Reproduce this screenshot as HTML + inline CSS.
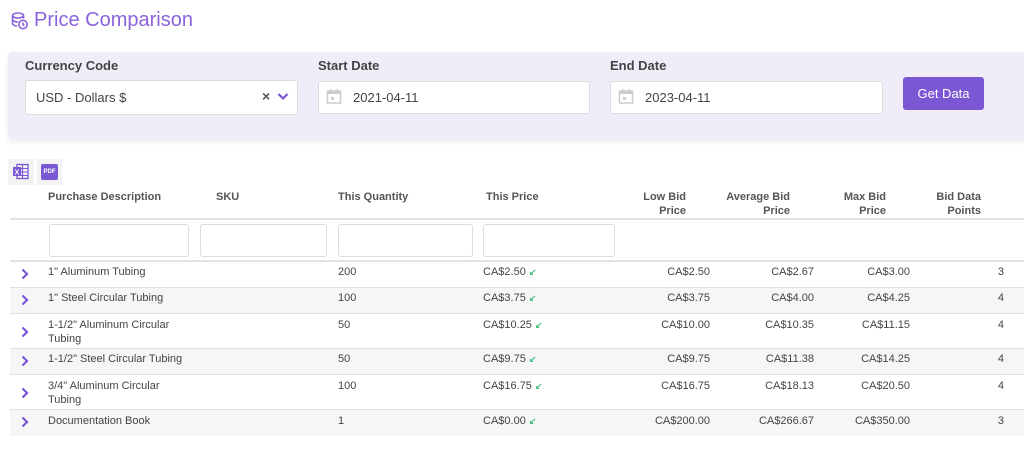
<!DOCTYPE html>
<html><head><meta charset="utf-8"><style>
*{box-sizing:border-box;margin:0;padding:0}
body{width:1024px;height:451px;background:#fff;font-family:"Liberation Sans",sans-serif;color:#444;position:relative;overflow:hidden}
.a{position:absolute;white-space:nowrap}
.title{left:34px;top:9px;font-size:20px;color:#8a63dc}
.panel{left:8px;top:52px;width:1030px;height:87px;background:#f0edf9;border-radius:4px;box-shadow:0 3px 6px rgba(0,0,0,.08)}
.lbl{font-size:13px;font-weight:bold;color:#444;top:58px}
.inp{background:#fff;border:1px solid #ddd;border-radius:3px;height:33px;top:81px;font-size:13px;color:#444;padding:8px 0 0 10px}
.btn{left:903px;top:77px;width:81px;height:33px;background:#7b57d4;border-radius:3px;color:#fff;font-size:13px;text-align:center;line-height:33px}
.th{font-size:11px;font-weight:bold;color:#555;line-height:14px}
.r{text-align:right}
.td{font-size:11px;color:#444;line-height:14px}
.line{left:10px;width:1014px;height:2px;background:#e3e3e3}
.fi{top:224px;height:33px;border:1px solid #ddd;border-radius:3px;background:#fff}
.grey{left:10px;width:1014px;background:#f6f6f6}
.sep{left:10px;width:1014px;height:1px;background:#e0e0e0}
.chev{left:19px;width:11px;height:12px}
.arr{color:#3fbf7f;font-size:9px;font-weight:bold}
</style></head><body>
<svg class="a" style="left:10px;top:11px" width="20" height="20" viewBox="0 0 20 20" fill="none" stroke="#8a63dc" stroke-width="1.6"><ellipse cx="8" cy="4.5" rx="5.5" ry="2.5"/><path d="M2.5 4.5v8c0 1.3 2 2.3 4.5 2.5M13.5 4.5v3M2.5 8.5c0 1.3 2.5 2.5 5.5 2.5"/><circle cx="13" cy="13.5" r="4.2"/><path d="M13 11.5v2.2l1.4 1"/></svg>
<div class="a title">Price Comparison</div>
<div class="a panel"></div>
<div class="a lbl" style="left:25px">Currency Code</div>
<div class="a lbl" style="left:318px">Start Date</div>
<div class="a lbl" style="left:610px">End Date</div>
<div class="a inp" style="left:25px;width:273px;height:35px;top:80px;padding-top:9px">USD - Dollars $</div>
<div class="a" style="left:262px;top:88px;font-size:14px;color:#555;font-weight:bold">×</div>
<svg class="a" style="left:277px;top:92px" width="12" height="9" viewBox="0 0 12 9"><path d="M1.5 2l4.5 4.5L10.5 2" stroke="#7b57d4" stroke-width="2.2" fill="none"/></svg>
<div class="a inp" style="left:318px;width:272px;padding-left:34px">2021-04-11</div>
<div class="a inp" style="left:610px;width:273px;padding-left:34px">2023-04-11</div>
<svg class="a" style="left:326px;top:88px" width="16" height="17" viewBox="0 0 16 17"><rect x="1.5" y="3" width="13" height="12" fill="none" stroke="#ccc" stroke-width="1.5"/><rect x="1.5" y="3" width="13" height="3" fill="#ccc"/><rect x="4" y="1" width="1.5" height="3" fill="#ccc"/><rect x="10.5" y="1" width="1.5" height="3" fill="#ccc"/><rect x="5" y="9" width="3" height="3" fill="#ccc"/></svg>
<svg class="a" style="left:618px;top:88px" width="16" height="17" viewBox="0 0 16 17"><rect x="1.5" y="3" width="13" height="12" fill="none" stroke="#ccc" stroke-width="1.5"/><rect x="1.5" y="3" width="13" height="3" fill="#ccc"/><rect x="4" y="1" width="1.5" height="3" fill="#ccc"/><rect x="10.5" y="1" width="1.5" height="3" fill="#ccc"/><rect x="5" y="9" width="3" height="3" fill="#ccc"/></svg>
<div class="a btn">Get Data</div>
<div class="a" style="left:8px;top:159px;width:26px;height:26px;background:#f3f3f3"></div>
<svg class="a" style="left:12px;top:163px" width="18" height="18" viewBox="0 0 18 18"><rect x="5" y="1.5" width="11" height="14" fill="none" stroke="#7b57d4" stroke-width="1.3"/><path d="M5 5.5h11M5 9h11M5 12.5h11M10.5 1.5v14" stroke="#7b57d4" stroke-width="1.1"/><rect x="1" y="4" width="8" height="9" fill="#7b57d4"/><text x="5" y="11.5" font-size="7" fill="#fff" text-anchor="middle" font-family="Liberation Sans" font-weight="bold">X</text></svg>
<div class="a" style="left:37px;top:159px;width:25px;height:26px;background:#f3f3f3"></div>
<div class="a" style="left:41px;top:164px;width:17px;height:16px;background:#7b57d4;border-radius:2px;color:#fff;font-size:6px;font-weight:bold;text-align:center;line-height:16px">PDF</div>
<div class="a th" style="left:48px;top:190px">Purchase Description</div>
<div class="a th" style="left:216px;top:190px">SKU</div>
<div class="a th" style="left:338px;top:190px">This Quantity</div>
<div class="a th" style="left:486px;top:190px">This Price</div>
<div class="a th r" style="right:338px;top:190px">Low Bid<br>Price</div>
<div class="a th r" style="right:234px;top:190px">Average Bid<br>Price</div>
<div class="a th r" style="right:138px;top:190px">Max Bid<br>Price</div>
<div class="a th r" style="right:43px;top:190px">Bid Data<br>Points</div>
<div class="a line" style="top:218px"></div>
<div class="a fi" style="left:49px;width:140px"></div>
<div class="a fi" style="left:200px;width:127px"></div>
<div class="a fi" style="left:338px;width:135px"></div>
<div class="a fi" style="left:483px;width:132px"></div>
<div class="a line" style="top:260px"></div>
<div class="a grey" style="top:288px;height:26px"></div>
<div class="a grey" style="top:349px;height:26px"></div>
<div class="a grey" style="top:410px;height:26px"></div>
<div class="a sep" style="top:287px"></div>
<div class="a sep" style="top:313px"></div>
<div class="a sep" style="top:348px"></div>
<div class="a sep" style="top:374px"></div>
<div class="a sep" style="top:409px"></div>
<!-- rows -->
<svg class="a chev" style="top:268px" viewBox="0 0 11 12"><path d="M3.5 1.5l4.5 4.5-4.5 4.5" stroke="#7b57d4" stroke-width="2.2" fill="none"/></svg>
<svg class="a chev" style="top:294px" viewBox="0 0 11 12"><path d="M3.5 1.5l4.5 4.5-4.5 4.5" stroke="#7b57d4" stroke-width="2.2" fill="none"/></svg>
<svg class="a chev" style="top:326px" viewBox="0 0 11 12"><path d="M3.5 1.5l4.5 4.5-4.5 4.5" stroke="#7b57d4" stroke-width="2.2" fill="none"/></svg>
<svg class="a chev" style="top:355px" viewBox="0 0 11 12"><path d="M3.5 1.5l4.5 4.5-4.5 4.5" stroke="#7b57d4" stroke-width="2.2" fill="none"/></svg>
<svg class="a chev" style="top:387px" viewBox="0 0 11 12"><path d="M3.5 1.5l4.5 4.5-4.5 4.5" stroke="#7b57d4" stroke-width="2.2" fill="none"/></svg>
<svg class="a chev" style="top:416px" viewBox="0 0 11 12"><path d="M3.5 1.5l4.5 4.5-4.5 4.5" stroke="#7b57d4" stroke-width="2.2" fill="none"/></svg>

<div class="a td" style="left:48px;top:265px">1" Aluminum Tubing</div>
<div class="a td" style="left:338px;top:265px">200</div>
<div class="a td" style="left:483px;top:265px">CA$2.50 <span class="arr">↙</span></div>
<div class="a td r" style="right:314px;top:265px">CA$2.50</div>
<div class="a td r" style="right:210px;top:265px">CA$2.67</div>
<div class="a td r" style="right:114px;top:265px">CA$3.00</div>
<div class="a td r" style="right:20px;top:265px">3</div>

<div class="a td" style="left:48px;top:291px">1" Steel Circular Tubing</div>
<div class="a td" style="left:338px;top:291px">100</div>
<div class="a td" style="left:483px;top:291px">CA$3.75 <span class="arr">↙</span></div>
<div class="a td r" style="right:314px;top:291px">CA$3.75</div>
<div class="a td r" style="right:210px;top:291px">CA$4.00</div>
<div class="a td r" style="right:114px;top:291px">CA$4.25</div>
<div class="a td r" style="right:20px;top:291px">4</div>

<div class="a td" style="left:48px;top:318px">1-1/2" Aluminum Circular<br>Tubing</div>
<div class="a td" style="left:338px;top:318px">50</div>
<div class="a td" style="left:483px;top:318px">CA$10.25 <span class="arr">↙</span></div>
<div class="a td r" style="right:314px;top:318px">CA$10.00</div>
<div class="a td r" style="right:210px;top:318px">CA$10.35</div>
<div class="a td r" style="right:114px;top:318px">CA$11.15</div>
<div class="a td r" style="right:20px;top:318px">4</div>

<div class="a td" style="left:48px;top:352px">1-1/2" Steel Circular Tubing</div>
<div class="a td" style="left:338px;top:352px">50</div>
<div class="a td" style="left:483px;top:352px">CA$9.75 <span class="arr">↙</span></div>
<div class="a td r" style="right:314px;top:352px">CA$9.75</div>
<div class="a td r" style="right:210px;top:352px">CA$11.38</div>
<div class="a td r" style="right:114px;top:352px">CA$14.25</div>
<div class="a td r" style="right:20px;top:352px">4</div>

<div class="a td" style="left:48px;top:379px">3/4" Aluminum Circular<br>Tubing</div>
<div class="a td" style="left:338px;top:379px">100</div>
<div class="a td" style="left:483px;top:379px">CA$16.75 <span class="arr">↙</span></div>
<div class="a td r" style="right:314px;top:379px">CA$16.75</div>
<div class="a td r" style="right:210px;top:379px">CA$18.13</div>
<div class="a td r" style="right:114px;top:379px">CA$20.50</div>
<div class="a td r" style="right:20px;top:379px">4</div>

<div class="a td" style="left:48px;top:414px">Documentation Book</div>
<div class="a td" style="left:338px;top:414px">1</div>
<div class="a td" style="left:483px;top:414px">CA$0.00 <span class="arr">↙</span></div>
<div class="a td r" style="right:314px;top:414px">CA$200.00</div>
<div class="a td r" style="right:210px;top:414px">CA$266.67</div>
<div class="a td r" style="right:114px;top:414px">CA$350.00</div>
<div class="a td r" style="right:20px;top:414px">3</div>
</body></html>
